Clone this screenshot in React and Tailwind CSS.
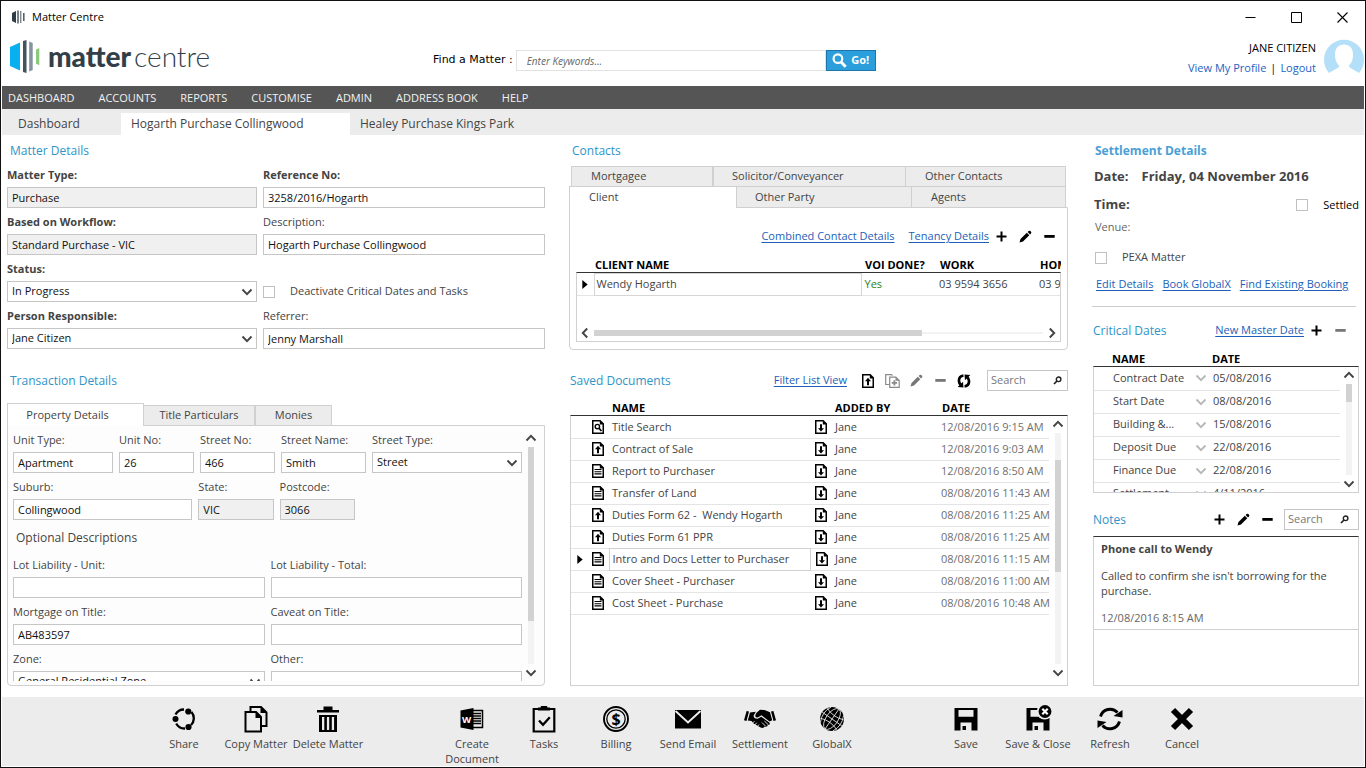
import React, { useId } from "react";

/* ---------- icons ---------- */

function Chevron({ dir = "down", className = "text-[#444]" }) {
  const paths = {
    down: "M1.5 3.5 6 8.2 10.5 3.5",
    up: "M1.5 8.5 6 3.8 10.5 8.5",
    left: "M8.2 1.5 3.8 6 8.2 10.5",
    right: "M3.8 1.5 8.2 6 3.8 10.5",
  };
  return (
    <svg viewBox="0 0 12 12" className={`h-3 w-3 shrink-0 ${className}`} fill="none" stroke="currentColor" strokeWidth="1.9" aria-hidden="true">
      <path d={paths[dir]} />
    </svg>
  );
}

function PlusIcon() {
  return (
    <svg viewBox="0 0 11 11" className="h-[11px] w-[11px]" aria-hidden="true">
      <path d="M4.5 0.5h2v4h4v2h-4v4h-2v-4h-4v-2h4z" fill="currentColor" />
    </svg>
  );
}

function MinusIcon() {
  return (
    <svg viewBox="0 0 11 11" className="h-[11px] w-[11px]" aria-hidden="true">
      <path d="M0.3 4h10.4v2.8H0.3z" fill="currentColor" />
    </svg>
  );
}

function PencilIcon() {
  return (
    <svg viewBox="0 0 13 13" className="h-[13px] w-[13px]" aria-hidden="true">
      <path d="M0.5 12.5 1.5 9 7.8 2.8 10.3 5.3 4 11.5zM8.6 2 9.6 1q0.9-0.7 1.8 0.1l0.6 0.6q0.8 0.9 0 1.8L11 4.5z" fill="currentColor" />
    </svg>
  );
}

function Page({ children, className = "text-black" }) {
  return (
    <svg viewBox="0 0 12 14" className={`block h-[14px] w-3 ${className}`} aria-hidden="true">
      <path d="M0.75 0.75h7.4l3.1 3.1v9.4H0.75z" fill="#fff" stroke="currentColor" strokeWidth="1.5" />
      <path d="M7.8 0.4v4h3.8z" fill="currentColor" />
      {children}
    </svg>
  );
}

function PageText() {
  return (
    <Page>
      <path d="M2.5 5.5h7M2.5 7.7h7M2.5 9.9h7" stroke="currentColor" strokeWidth="1.1" />
    </Page>
  );
}

function PageUp() {
  return (
    <Page>
      <path d="M6 3.8 9 7.2H7v4H5v-4H3z" fill="currentColor" />
    </Page>
  );
}

function PageDown() {
  return (
    <Page>
      <path d="M6 11.6 9 8.2H7v-4H5v4H3z" fill="currentColor" />
    </Page>
  );
}

function PageSearch() {
  return (
    <Page>
      <circle cx="5.4" cy="6.6" r="2.2" fill="none" stroke="currentColor" strokeWidth="1.4" />
      <path d="M6.8 8 9.4 11" stroke="currentColor" strokeWidth="1.7" />
    </Page>
  );
}

function AddCopyIcon() {
  return (
    <svg viewBox="0 0 15 14" className="h-[14px] w-[15px]" fill="none" stroke="currentColor" aria-hidden="true">
      <path d="M4 10.5H0.7V0.7h5.8l1 1" strokeWidth="1.2" />
      <path d="M4.7 3.2h6.1l3.4 3.3v6.8H4.7z" strokeWidth="1.2" />
      <path d="M10.5 3v3.8h4z" fill="currentColor" stroke="none" />
      <path d="M9.4 6.2v5.4M6.7 8.9h5.4" strokeWidth="1.8" />
    </svg>
  );
}

function SyncIcon() {
  return (
    <svg viewBox="0 0 13 13" className="h-[14px] w-[14px]" aria-hidden="true">
      <path d="M6 1.4Q1.800 2 1.800 6.400q0.100 2 1.600 3.600" fill="none" stroke="currentColor" strokeWidth="2.5" />
      <path d="M0.600 12 6 12.600 5.600 7.200z" fill="currentColor" />
      <path d="M7 11.600Q11.200 11 11.200 6.600q-0.100-2-1.600-3.600" fill="none" stroke="currentColor" strokeWidth="2.5" />
      <path d="M12.400 1 7 0.400 7.400 5.800z" fill="currentColor" />
    </svg>
  );
}

function SmallSearchIcon() {
  return (
    <svg viewBox="0 0 9 9" className="h-[9px] w-[9px] shrink-0" fill="none" stroke="#222" aria-hidden="true">
      <circle cx="5.600" cy="3.300" r="2.300" strokeWidth="1.400" />
      <path d="M4 5 1 8" strokeWidth="1.700" />
    </svg>
  );
}

function Bars({ small }) {
  return small ? (
    <svg viewBox="0 0 13 14" className="h-[14px] w-[13px]" aria-hidden="true">
      <path d="M0 3 4 1v12L0 11z" fill="#2f3b45" />
      <path d="M5.200 0.500h1.600v13H5.200z" fill="#56626c" />
      <path d="M8 1h1.400v12H8z" fill="#7d8790" />
      <path d="M11 3h1.600v8H11z" fill="#56626c" />
    </svg>
  ) : (
    <svg viewBox="0 0 30 33" className="h-[33px] w-[30px]" aria-hidden="true">
      <path d="M0 7 10 2.500v28L0 26z" fill="#08b0f0" />
      <path d="M13 1 16.500 0v33L13 32z" fill="#43525f" />
      <path d="M19.200 1.500 22.700 3v27l-3.500 1.500z" fill="#8592a0" />
      <path d="M26 9.500 29.300 8v17.200L26 23.700z" fill="#8cc97c" />
    </svg>
  );
}

function MarkerIcon() {
  return (
    <svg viewBox="0 0 6 10" className="mx-auto block h-[9px] w-[6px]" aria-hidden="true">
      <path d="M0 0 6 5 0 10z" fill="#000" />
    </svg>
  );
}

/* ---------- shared controls ---------- */

const control = "block h-[21px] w-full border border-[#c6c6c6] px-1 text-[11px] text-[#111] outline-none";
const labelRow = "flex h-[26px] items-center whitespace-nowrap pt-[2px] text-[11px] text-[#444]";

function Field({ label, value, bold, muted }) {
  const id = useId();
  return (
    <div className="flex min-w-0 flex-col">
      <label htmlFor={id} className={`${labelRow} ${bold ? "font-bold" : ""}`}>{label}</label>
      <input id={id} type="text" defaultValue={value} readOnly={muted} className={`${control} ${muted ? "bg-[#f0f0f0]" : "bg-white"}`} />
    </div>
  );
}

function SelectField({ label, value, bold }) {
  const id = useId();
  return (
    <div className="flex min-w-0 flex-col">
      <label htmlFor={id} className={`${labelRow} ${bold ? "font-bold" : ""}`}>{label}</label>
      <div className="relative">
        <select id={id} defaultValue={value} className={`${control} appearance-none bg-white`}>
          <option>{value}</option>
        </select>
        <span className="pointer-events-none absolute inset-y-0 right-1 flex items-center">
          <Chevron />
        </span>
      </div>
    </div>
  );
}

function Check({ label, className }) {
  return (
    <label className={`flex items-center gap-[15px] text-[11px] ${className}`}>
      <input type="checkbox" className="h-3 w-3 shrink-0 appearance-none border border-[#c0c0c0] bg-white" />
      {label}
    </label>
  );
}

function TextLink({ children }) {
  return (
    <a href="#" className="whitespace-nowrap text-[11px] text-[#1c5fb8] underline underline-offset-2">
      {children}
    </a>
  );
}

function IconButton({ label, children, className = "text-black" }) {
  return (
    <button type="button" aria-label={label} className={`flex h-[21px] w-6 items-center justify-center ${className}`}>
      {children}
    </button>
  );
}

function SearchBox({ label, className }) {
  return (
    <div className={`flex h-[21px] items-center border border-[#c6c6c6] bg-white pl-[3px] ${className}`}>
      <input type="text" aria-label={label} placeholder="Search" className="w-full min-w-0 bg-transparent text-[11px] outline-none placeholder:text-[#777]" />
      <SmallSearchIcon />
    </div>
  );
}

function Heading({ children, className = "text-[#2e94c8]" }) {
  return <h2 className={`whitespace-nowrap text-[12px] leading-5 ${className}`}>{children}</h2>;
}

function VScroll({ thumb }) {
  return (
    <div className="flex w-[18px] shrink-0 flex-col items-center py-[2px]">
      <Chevron dir="up" />
      <div className="my-[3px] flex w-[6px] flex-1 flex-col bg-[#f3f3f3]">
        <div className={`bg-[#d2d2d2] ${thumb}`} />
      </div>
      <Chevron />
    </div>
  );
}

/* ---------- window header ---------- */

function TitleBar() {
  return (
    <div className="flex h-[32px] items-center pl-[11px]">
      <Bars small />
      <span className="ml-[7px] text-[11px] text-black">Matter Centre</span>
      <div className="ml-auto flex">
        <button type="button" aria-label="Minimise" className="flex h-[30px] w-[46px] items-center justify-center">
          <svg viewBox="0 0 11 11" className="h-[11px] w-[11px]" stroke="#000"><path d="M0.500 5.500h10" /></svg>
        </button>
        <button type="button" aria-label="Maximise" className="flex h-[30px] w-[46px] items-center justify-center">
          <svg viewBox="0 0 11 11" className="h-[11px] w-[11px]" fill="none" stroke="#000"><path d="M0.500 0.500h10v10h-10z" /></svg>
        </button>
        <button type="button" aria-label="Close" className="flex h-[30px] w-[46px] items-center justify-center">
          <svg viewBox="0 0 11 11" className="h-[11px] w-[11px]" fill="none" stroke="#000" strokeWidth="1.100"><path d="m0.500 0.500 10 10M10.500 0.500l-10 10" /></svg>
        </button>
      </div>
    </div>
  );
}

function Header() {
  return (
    <header className="flex h-[53px] items-start pl-[9px]">
      <a href="#" className="flex w-[31%] items-center gap-2 pt-[7px] font-['Lato',sans-serif] text-[28px] leading-[33px] text-[#333f48]">
        <Bars />
        <span>
          <span className="font-black">matter</span>
          <span className="pl-[3px] font-light">centre</span>
        </span>
      </a>
      <form className="mt-[17px] flex h-[21px] items-center pl-[3px]" onSubmit={(e) => e.preventDefault()}>
        <label htmlFor="find" className="whitespace-nowrap pr-[3px] font-['DejaVu_Sans',sans-serif] text-[11px] text-black">
          Find a Matter :
        </label>
        <input id="find" type="text" placeholder="Enter Keywords..." className="h-[21px] w-[310px] border border-[#e2e2e2] px-[10px] text-[10px] italic outline-none placeholder:text-[#666]" />
        <button type="submit" className="flex h-[21px] w-[50px] items-center justify-center gap-1 border border-[#1c76ac] bg-[#2a9fdc] text-[11px] font-bold text-white">
          <svg viewBox="0 0 16 16" className="h-[15px] w-[15px]" fill="none" stroke="#fff" aria-hidden="true">
            <circle cx="6.300" cy="6" r="4.600" strokeWidth="2.300" />
            <path d="m9.600 9.600 5 5" strokeWidth="3.200" />
          </svg>
          Go!
        </button>
      </form>
      <div className="ml-auto flex pt-[5px] pr-px">
        <div className="flex flex-col items-end pr-2 text-[11px] leading-5 text-black">
          <span>JANE CITIZEN</span>
          <span className="flex gap-1">
            <a href="#" className="text-[#1c63c4]">View My Profile</a>|<a href="#" className="text-[#1c63c4]">Logout</a>
          </span>
        </div>
        <svg viewBox="0 0 40 35" className="mt-px h-[35px] w-10" aria-hidden="true">
          <path d="M5 34A20 20 0 1 1 35 34L26.500 29q-1.500-0.800-1.500-2.500C28 23.500 29 20 29 15.500 29 9 25.500 5.500 20 5.500S11 9 11 15.500c0 4.500 1 8 4 11 0 1.700 0 2-1.500 2.500z" fill="#b3e0f8" />
        </svg>
      </div>
    </header>
  );
}

function Nav() {
  const items = ["DASHBOARD", "ACCOUNTS", "REPORTS", "CUSTOMISE", "ADMIN", "ADDRESS BOOK", "HELP"];
  return (
    <nav className="mx-px flex h-[23px] items-center gap-6 bg-[#555] px-[6px] pt-px text-[11px] text-[#f2f2f2]">
      {items.map((t) => (
        <a key={t} href="#" className="whitespace-nowrap">{t}</a>
      ))}
    </nav>
  );
}

function PageTabs() {
  return (
    <div role="tablist" className="mx-px flex h-[26px] items-stretch bg-[#ececec] pt-1 text-[12px] text-[#444]">
      <button type="button" role="tab" aria-selected="false" className="w-[119px] pl-4 text-left">Dashboard</button>
      <button type="button" role="tab" aria-selected="true" className="w-[229px] bg-white pl-[10px] text-left">Hogarth Purchase Collingwood</button>
      <button type="button" role="tab" aria-selected="false" className="pl-[10px] text-left">Healey Purchase Kings Park</button>
    </div>
  );
}

/* ---------- left column ---------- */

function MatterDetails() {
  return (
    <section>
      <div className="flex h-[26px] items-end pl-[3px]"><Heading>Matter Details</Heading></div>
      <div className="grid grid-cols-[250fr_282fr] gap-x-[6px]">
        <Field label="Matter Type:" value="Purchase" bold muted />
        <Field label="Reference No:" value="3258/2016/Hogarth" bold />
        <Field label="Based on Workflow:" value="Standard Purchase - VIC" bold muted />
        <Field label="Description:" value="Hogarth Purchase Collingwood" />
        <SelectField label="Status:" value="In Progress" bold />
        <div className="flex items-end">
          <Check label="Deactivate Critical Dates and Tasks" className="h-[21px] text-[#444]" />
        </div>
        <SelectField label="Person Responsible:" value="Jane Citizen" bold />
        <Field label="Referrer:" value="Jenny Marshall" />
      </div>
    </section>
  );
}

const sideTab = "border-[#d0d0d0] text-[11px] text-[#444]";

function TransactionDetails() {
  return (
    <section className="mt-[21px] flex min-h-0 flex-1 flex-col">
      <div className="flex h-[21px] items-center pl-[3px]"><Heading>Transaction Details</Heading></div>
      <div role="tablist" className="z-10 mt-3 -mb-px flex h-[23px] items-end">
        <button type="button" role="tab" aria-selected="true" className={`h-[23px] w-[137px] border border-b-0 bg-white pr-4 ${sideTab}`}>Property Details</button>
        <button type="button" role="tab" aria-selected="false" className={`h-[21px] w-[112px] border-y border-r-2 bg-[#ececec] ${sideTab}`}>Title Particulars</button>
        <button type="button" role="tab" aria-selected="false" className={`h-[21px] w-[76px] border-y border-r bg-[#ececec] ${sideTab}`}>Monies</button>
      </div>
      <div className="flex min-h-0 flex-1 rounded-b-sm border border-[#d0d0d0] bg-[#fdfdfd] pr-1 pb-1 pl-[5px]">
        <div className="min-h-0 min-w-0 flex-1 overflow-hidden">
          <div className="grid grid-cols-[100fr_75fr_75fr_85fr_150fr] gap-x-[6px]">
            <Field label="Unit Type:" value="Apartment" />
            <Field label="Unit No:" value="26" />
            <Field label="Street No:" value="466" />
            <Field label="Street Name:" value="Smith" />
            <SelectField label="Street Type:" value="Street" />
          </div>
          <div className="grid grid-cols-[179fr_75fr_75fr_161fr] gap-x-[6px]">
            <Field label="Suburb:" value="Collingwood" />
            <Field label="State:" value="VIC" muted />
            <Field label="Postcode:" value="3066" muted />
          </div>
          <h3 className="flex h-[31px] items-center pt-1 pl-[3px] text-[12px] text-[#444]">Optional Descriptions</h3>
          <div className="grid grid-cols-2 gap-x-[6px]">
            <Field label="Lot Liability - Unit:" value="" />
            <Field label="Lot Liability - Total:" value="" />
            <Field label="Mortgage on Title:" value="AB483597" />
            <Field label="Caveat on Title:" value="" />
            <SelectField label="Zone:" value="General Residential Zone" />
            <Field label="Other:" value="" />
          </div>
        </div>
        <div className="flex pt-1"><VScroll thumb="h-[80%]" /></div>
      </div>
    </section>
  );
}

/* ---------- middle column ---------- */

const cell = "whitespace-nowrap p-0 text-left text-[11px]";
const headCell = "whitespace-nowrap p-0 text-left text-[11px] leading-[14px] font-bold";

function Contacts() {
  const cols = (
    <colgroup>
      <col className="w-[17px]" />
      <col />
      <col className="w-[77px]" />
      <col className="w-[100px]" />
      <col className="w-[22px]" />
    </colgroup>
  );
  return (
    <section className="flex flex-col">
      <div className="flex h-[26px] items-end pl-[3px]"><Heading>Contacts</Heading></div>
      <div role="tablist" className="mt-[5px]">
        <div className="mx-[2px] grid h-5 grid-cols-[141fr_193fr_161fr]">
          <button type="button" role="tab" aria-selected="false" className={`border-t border-l bg-[#ececec] pl-[19px] text-left ${sideTab}`}>Mortgagee</button>
          <button type="button" role="tab" aria-selected="false" className={`border-t border-l-2 bg-[#ececec] pl-[18px] text-left ${sideTab}`}>Solicitor/Conveyancer</button>
          <button type="button" role="tab" aria-selected="false" className={`border-t border-x bg-[#ececec] pl-[19px] text-left ${sideTab}`}>Other Contacts</button>
        </div>
        <div className="relative z-10 -mb-px mr-[2px] grid h-[22px] grid-cols-[167fr_175fr_155fr]">
          <button type="button" role="tab" aria-selected="true" className={`border-t border-l bg-white pl-[19px] text-left ${sideTab}`}>Client</button>
          <button type="button" role="tab" aria-selected="false" className={`border-y border-l bg-[#ececec] pl-[18px] text-left ${sideTab}`}>Other Party</button>
          <button type="button" role="tab" aria-selected="false" className={`border-y border-x bg-[#ececec] pl-[19px] text-left ${sideTab}`}>Agents</button>
        </div>
      </div>
      <div className="rounded-b-sm border border-[#d0d0d0] px-[6px] pt-[18px] pb-[7px]">
        <div className="flex h-5 items-center justify-end">
          <span className="flex gap-[14px]">
            <TextLink>Combined Contact Details</TextLink>
            <TextLink>Tenancy Details</TextLink>
          </span>
          <IconButton label="Add contact"><PlusIcon /></IconButton>
          <IconButton label="Edit contact"><PencilIcon /></IconButton>
          <IconButton label="Remove contact"><MinusIcon /></IconButton>
        </div>
        <table className="w-full table-fixed">
          {cols}
          <thead>
            <tr className="h-[26px] align-bottom text-black">
              <th className="p-0" />
              <th className={`${headCell} pl-[2px]`}>CLIENT NAME</th>
              <th className={`${headCell} pl-[3px]`}>VOI DONE?</th>
              <th className={`${headCell} pl-[1px]`}>WORK</th>
              <th className={`${headCell} overflow-hidden pl-[1px]`}>HOME</th>
            </tr>
          </thead>
        </table>
        <div className="flex h-[70px] flex-col overflow-hidden border border-[#d0d0d0] border-t-[#333]">
          <table className="w-full table-fixed">
            {cols}
            <tbody>
              <tr className="h-[22px] border-b border-[#e4e4e4] text-[#444]">
                <td className="p-0"><MarkerIcon /></td>
                <td className={`${cell} border border-[#d6d6d6] pl-[2px]`}>Wendy Hogarth</td>
                <td className={`${cell} pl-[3px] text-[#2c8420]`}>Yes</td>
                <td className={`${cell} pl-[1px]`}>03 9594 3656</td>
                <td className={`${cell} overflow-hidden pl-[1px]`}>03 9594</td>
              </tr>
            </tbody>
          </table>
          <div className="mt-auto flex h-[17px] items-center gap-[3px] px-[2px]">
            <Chevron dir="left" />
            <div className="flex h-[2px] flex-1 items-center bg-[#f3f3f3]">
              <div className="h-[6px] w-[73%] bg-[#d2d2d2]" />
            </div>
            <Chevron dir="right" />
          </div>
        </div>
      </div>
    </section>
  );
}

const documents = [
  ["Title Search", PageSearch, "12/08/2016 9:15 AM"],
  ["Contract of Sale", PageUp, "12/08/2016 9:03 AM"],
  ["Report to Purchaser", PageText, "12/08/2016 8:50 AM"],
  ["Transfer of Land", PageText, "08/08/2016 11:43 AM"],
  ["Duties Form 62 - \u00a0Wendy Hogarth", PageUp, "08/08/2016 11:25 AM"],
  ["Duties Form 61 PPR", PageUp, "08/08/2016 11:25 AM"],
  ["Intro and Docs Letter to Purchaser", PageText, "08/08/2016 11:15 AM"],
  ["Cover Sheet - Purchaser", PageText, "08/08/2016 11:00 AM"],
  ["Cost Sheet - Purchase", PageText, "08/08/2016 10:48 AM"],
];

function SavedDocuments() {
  const cols = (
    <colgroup>
      <col className="w-[17px]" />
      <col className="w-[21px]" />
      <col />
      <col className="w-[22px]" />
      <col className="w-[107px]" />
      <col className="w-[110px]" />
    </colgroup>
  );
  return (
    <section className="mt-5 flex min-h-0 flex-1 flex-col pl-px">
      <div className="flex h-[21px] items-center">
        <Heading>Saved Documents</Heading>
        <span className="mr-[9px] ml-auto flex"><TextLink>Filter List View</TextLink></span>
        <IconButton label="Upload document"><PageUp /></IconButton>
        <IconButton label="Duplicate document" className="text-[#8a8a8a]"><AddCopyIcon /></IconButton>
        <IconButton label="Edit document" className="text-[#777]"><PencilIcon /></IconButton>
        <IconButton label="Remove document" className="text-[#777]"><MinusIcon /></IconButton>
        <IconButton label="Reload documents"><SyncIcon /></IconButton>
        <SearchBox label="Search documents" className="ml-[11px] w-[81px] pr-[5px]" />
      </div>
      <div className="pr-[19px] pl-px">
        <table className="w-full table-fixed">
          {cols}
          <thead>
            <tr className="h-6 align-bottom text-black">
              <th className="p-0" />
              <th className="p-0" />
              <th className={`${headCell} pl-[3px]`}>NAME</th>
              <th className="p-0" />
              <th className={`${headCell} pl-[3px]`}>ADDED BY</th>
              <th className={`${headCell} pl-[3px]`}>DATE</th>
            </tr>
          </thead>
        </table>
      </div>
      <div className="flex min-h-0 flex-1 overflow-hidden border border-[#d0d0d0] border-t-[#333]">
        <div className="min-w-0 flex-1">
          <table className="w-full table-fixed">
            {cols}
            <tbody>
              {documents.map(([name, Icon, date]) => {
                const active = name.startsWith("Intro");
                return (
                  <tr key={name} className="h-[22px] border-b border-[#e4e4e4] text-[#444]">
                    <td className="p-0">{active && <MarkerIcon />}</td>
                    <td className="p-0 pl-1"><Icon /></td>
                    <td className={`${cell} pl-[3px] ${active ? "border border-[#d0d0d0]" : ""}`}>{name}</td>
                    <td className="p-0 pl-[5px]"><PageDown /></td>
                    <td className={`${cell} pl-[3px]`}>Jane</td>
                    <td className={`${cell} pl-[2px] text-[#707070]`}>{date}</td>
                  </tr>
                );
              })}
            </tbody>
          </table>
        </div>
        <div className="flex pb-1">
          <div className="flex w-[18px] flex-col items-center py-[2px]">
            <Chevron dir="up" />
            <div className="my-[3px] flex w-[6px] flex-1 flex-col bg-[#f3f3f3] pt-[27px]">
              <div className="h-[55%] bg-[#d2d2d2]" />
            </div>
            <Chevron />
          </div>
        </div>
      </div>
    </section>
  );
}

/* ---------- right column ---------- */

function SettlementDetails() {
  return (
    <section>
      <div className="flex h-[26px] items-end pl-[3px]">
        <Heading className="font-bold text-[#4a9fd6]">Settlement Details</Heading>
      </div>
      <div className="flex h-8 items-center gap-[13px] pl-[2px] text-[13px] font-bold text-[#444]">
        <span>Date:</span>
        <span>Friday, 04 November 2016</span>
      </div>
      <div className="flex h-6 items-center justify-between pl-[2px]">
        <span className="text-[13px] font-bold text-[#444]">Time:</span>
        <Check label="Settled" className="text-black" />
      </div>
      <div className="flex h-5 items-center pl-[3px] text-[11px] text-[#666]">Venue:</div>
      <div className="mt-[10px] flex h-[21px] items-center pl-[3px]">
        <Check label="PEXA Matter" className="text-[#444]" />
      </div>
      <div className="mr-[3px] flex h-[39px] items-center gap-[9px] border-b border-[#ccc] pb-[6px] pl-1">
        <TextLink>Edit Details</TextLink>
        <TextLink>Book GlobalX</TextLink>
        <TextLink>Find Existing Booking</TextLink>
      </div>
    </section>
  );
}

const criticalDates = [
  ["Contract Date", "05/08/2016"],
  ["Start Date", "08/08/2016"],
  ["Building &...", "15/08/2016"],
  ["Deposit Due", "22/08/2016"],
  ["Finance Due", "22/08/2016"],
  ["Settlement", "4/11/2016"],
];

function CriticalDates() {
  const cols = (
    <colgroup>
      <col className="w-[19px]" />
      <col className="w-[80px]" />
      <col className="w-[19px]" />
      <col />
    </colgroup>
  );
  return (
    <section className="mt-[13px] pl-px">
      <div className="flex h-[21px] items-center pr-[7px]">
        <Heading>Critical Dates</Heading>
        <span className="ml-auto flex"><TextLink>New Master Date</TextLink></span>
        <IconButton label="Add date"><PlusIcon /></IconButton>
        <IconButton label="Remove date" className="text-[#777]"><MinusIcon /></IconButton>
      </div>
      <table className="w-full table-fixed">
        {cols}
        <thead>
          <tr className="h-[25px] align-bottom text-black">
            <th className="p-0" />
            <th className={headCell}>NAME</th>
            <th className="p-0" />
            <th className={`${headCell} pl-px`}>DATE</th>
          </tr>
        </thead>
      </table>
      <div className="flex h-[127px] overflow-hidden border border-[#d0d0d0] border-t-[#333]">
        <div className="min-w-0 flex-1">
          <table className="w-full table-fixed">
            {cols}
            <tbody>
              {criticalDates.map(([name, date]) => (
                <tr key={name} className="h-[23px] border-b border-[#e4e4e4] text-[#444]">
                  <td className="p-0" />
                  <td className={cell}>{name}</td>
                  <td className="p-0"><Chevron className="ml-[2px] text-[#b8b8b8]" /></td>
                  <td className={`${cell} pl-px`}>{date}</td>
                </tr>
              ))}
            </tbody>
          </table>
        </div>
        <VScroll thumb="h-[20%]" />
      </div>
    </section>
  );
}

function Notes() {
  return (
    <section className="mt-4 flex min-h-0 flex-1 flex-col pl-px">
      <div className="flex h-[21px] items-center">
        <Heading>Notes</Heading>
        <div className="ml-auto flex">
          <IconButton label="Add note"><PlusIcon /></IconButton>
          <IconButton label="Edit note"><PencilIcon /></IconButton>
          <IconButton label="Remove note"><MinusIcon /></IconButton>
        </div>
        <SearchBox label="Search notes" className="ml-[5px] w-[75px] pr-[9px]" />
      </div>
      <div className="mt-[6px] min-h-0 flex-1 border border-[#d0d0d0] border-t-[#333] text-[11px] leading-[15px] text-[#444]">
        <article className="border-b border-[#d0d0d0] px-[7px] pt-1 pb-1">
          <h3 className="font-bold">Phone call to Wendy</h3>
          <p className="mt-3">Called to confirm she isn't borrowing for the purchase.</p>
          <p className="mt-3 text-[#666]">12/08/2016 8:15 AM</p>
        </article>
      </div>
    </section>
  );
}

/* ---------- bottom toolbar ---------- */

function Glyph({ children }) {
  return (
    <svg viewBox="0 0 28 28" className="h-7 w-7" fill="none" stroke="#000" aria-hidden="true">
      {children}
    </svg>
  );
}

const share = (
  <Glyph>
    <path d="M5.500 9.500A9.500 9.500 0 0 1 14 4.500M21.500 7A9.500 9.500 0 0 1 21 20M15 23.500A9.500 9.500 0 0 1 6.200 18.500" strokeWidth="2.300" />
    <g fill="#000" stroke="none">
      <circle cx="5.500" cy="14" r="3" />
      <circle cx="18.300" cy="6.500" r="3.100" />
      <circle cx="18.500" cy="22" r="3.100" />
    </g>
  </Glyph>
);

const copy = (
  <Glyph>
    <path d="M8.500 6.500V2h10.500l5.500 5.500V21h-5" strokeWidth="2" />
    <path d="M18.500 1.500v6.500h6.500z" fill="#000" stroke="none" />
    <path d="M3.500 7h10.500l5 5v14.500H3.500z" fill="#ececec" strokeWidth="2" />
    <path d="M13.500 6.500v6.500H20z" fill="#000" stroke="none" />
  </Glyph>
);

const trash = (
  <Glyph>
    <g fill="#000" stroke="none">
      <path d="M9.500 1.500h9V5h-9zM3 5h22v2.500H3z" />
      <path d="M5 10h18v17H5zM8 12v13h2.300V12zM12.900 12v13h2.300V12zM17.800 12v13h2.300V12z" fillRule="evenodd" />
    </g>
  </Glyph>
);

const word = (
  <Glyph>
    <path d="M14 5.500h10.500v17H14" fill="#ececec" strokeWidth="1.500" />
    <path d="M15 8.500h8M15 11h8M15 13.500h8M15 16h8M15 18.500h8" strokeWidth="1.300" />
    <path d="M2.500 5.500 15.500 3v22L2.500 22.500z" fill="#000" stroke="none" />
    <text x="8.700" y="17.500" textAnchor="middle" fontSize="9.500" fontWeight="bold" fill="#fff" stroke="none" className="font-['Open_Sans',sans-serif]">W</text>
  </Glyph>
);

const tasks = (
  <Glyph>
    <path d="M3.700 4h20.600v22.500H3.700z" strokeWidth="2.200" />
    <path d="M8 5.500V2.500h2.500L11 1h6l.5 1.500H20v3z" fill="#000" stroke="none" />
    <path d="m9 15.500 4 4.300 6.800-7.500" strokeWidth="2.300" />
  </Glyph>
);

const billing = (
  <Glyph>
    <circle cx="14" cy="14" r="12" strokeWidth="1.900" />
    <circle cx="14" cy="14" r="9.200" strokeWidth="1.300" />
    <text x="14" y="19.700" textAnchor="middle" fontSize="16" fontWeight="bold" fill="#000" stroke="none" className="font-['Open_Sans',sans-serif]">$</text>
  </Glyph>
);

const mail = (
  <Glyph>
    <path d="M1 5h26v18.500H1z" fill="#000" stroke="none" />
    <path d="m1.500 6 12.500 11.500L26.500 6" stroke="#ececec" strokeWidth="2" />
  </Glyph>
);

const handshake = (
  <svg viewBox="0 0 32 20" className="h-5 w-8" aria-hidden="true">
    <path d="M2.600 2 5 2.600 2.500 12 0 11.300zM29.400 2 27 2.600 29.500 12 32 11.300z" fill="#000" />
    <path d="M6 3.500 11.800 2.800 9.600 6.600Q9.900 10.100 13.700 9.800L17.200 7.800 25.600 13.800Q26.300 16.200 23.900 16.100 23.300 18.200 20.800 17.500 19.600 19.600 16.600 18.500L9.600 14.600 7.500 12 3.800 11.400z" fill="#000" />
    <path d="M12.300 4 16 0.800 20.500 1 26 3.200 28.200 11.200 25.600 12.400 17.500 6.300 13.700 8.500Q11 8.600 11.300 6.200z" fill="#000" />
    <path d="M8 14.800 10.500 12.200M10.500 16.400 12.800 13.700M13.200 17.800 15 15.500M18 13.500 21.600 17.200M20.400 12 24.500 16" stroke="#ececec" strokeWidth="0.900" />
  </svg>
);

const globe = (
  <Glyph>
    <circle cx="14" cy="14" r="12" fill="#000" stroke="none" />
    <g transform="rotate(35 14 14)" stroke="#ececec" strokeWidth="0.800">
      <path d="M14 2v24M2 14h24M4 8q10 4 20 0M4 20q10-4 20 0" />
      <ellipse cx="14" cy="14" rx="6" ry="12" />
      <path d="M6.500 4.500Q1.500 14 6.500 23.500M21.500 4.500Q26.500 14 21.500 23.500" />
    </g>
  </Glyph>
);

const disk = "M2.500 3h23v22.500h-23zM6.500 5v6.800h15V5zM8.500 17.500v8h11v-8z";

const save = (
  <Glyph>
    <path d={disk} fill="#000" stroke="none" fillRule="evenodd" />
    <path d="M10.500 21h3.500v4h-3.500z" fill="#000" stroke="none" />
  </Glyph>
);

const saveClose = (
  <Glyph>
    <path d={disk} fill="#000" stroke="none" fillRule="evenodd" />
    <path d="M10.500 21h3.500v4h-3.500z" fill="#000" stroke="none" />
    <circle cx="20.700" cy="6.500" r="8" fill="#ececec" stroke="none" />
    <circle cx="21" cy="6.500" r="6.400" fill="#000" stroke="none" />
    <path d="m18.300 3.800 5.400 5.400m0-5.400-5.400 5.400" stroke="#fff" strokeWidth="2.200" />
  </Glyph>
);

const refresh = (
  <Glyph>
    <path d="M4.500 11.500A10 10 0 0 1 21.500 7.500M23.500 16.500A10 10 0 0 1 6.500 20.500" strokeWidth="2.900" />
    <path d="M26.500 5v7.500L17.500 11zM1.500 23v-7.500l9 1.500z" fill="#000" stroke="none" />
  </Glyph>
);

const cancel = (
  <Glyph>
    <path d="m5 5 18 18M23 5 5 23" strokeWidth="6" />
  </Glyph>
);

function ToolGroup({ items }) {
  return (
    <div className="flex">
      {items.map(([label, icon], i) =>
        label ? (
          <button key={label} type="button" className="flex w-[72px] flex-col items-center text-[11px] leading-[15px] text-[#444]">
            <span className="flex h-7 w-full items-center justify-center">{icon}</span>
            <span className="mt-[3px] flex justify-center"><span className={label === "Create Document" ? "w-[60px]" : "whitespace-nowrap"}>{label}</span></span>
          </button>
        ) : (
          <span key={i} className="w-[72px]" />
        )
      )}
    </div>
  );
}

function Toolbar() {
  return (
    <footer className="mx-px mb-px flex h-[69px] items-start justify-center gap-[62px] bg-[#ececec] pt-2">
      <ToolGroup
        items={[
          ["Share", share],
          ["Copy Matter", copy],
          ["Delete Matter", trash],
          [null],
          ["Create Document", word],
          ["Tasks", tasks],
          ["Billing", billing],
          ["Send Email", mail],
          ["Settlement", handshake],
          ["GlobalX", globe],
        ]}
      />
      <ToolGroup
        items={[
          ["Save", save],
          ["Save & Close", saveClose],
          ["Refresh", refresh],
          ["Cancel", cancel],
        ]}
      />
    </footer>
  );
}

export default function App() {
  return (
    <div className="flex h-screen min-h-[740px] min-w-[1240px] flex-col border border-[#111] bg-white font-['Open_Sans',sans-serif]">
      <TitleBar />
      <Header />
      <Nav />
      <PageTabs />
      <main className="grid min-h-0 flex-1 grid-cols-[538fr_499fr_267fr] grid-rows-[minmax(0,1fr)] gap-x-6 px-[6px] pb-[11px]">
        <div className="flex min-h-0 min-w-0 flex-col">
          <MatterDetails />
          <TransactionDetails />
        </div>
        <div className="flex min-h-0 min-w-0 flex-col">
          <Contacts />
          <SavedDocuments />
        </div>
        <div className="flex min-h-0 min-w-0 flex-col">
          <SettlementDetails />
          <CriticalDates />
          <Notes />
        </div>
      </main>
      <Toolbar />
    </div>
  );
}
